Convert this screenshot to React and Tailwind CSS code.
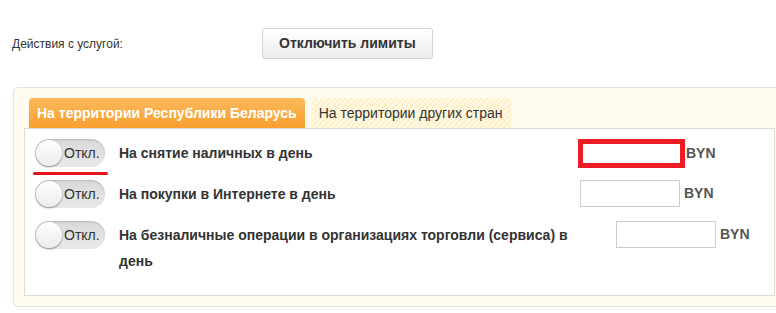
import React from 'react';

function Toggle({ marked }) {
  return (
    <div className="relative shrink-0">
      <div className="flex items-center w-[70px] h-[28px] rounded-full bg-gradient-to-b from-[#d9d9d9] to-[#e9e9e9] shadow-[inset_0_1px_2px_rgba(0,0,0,0.15)]">
        <div className="w-[26px] h-[26px] ml-[1px] rounded-full bg-gradient-to-b from-white to-[#ececec] shadow-[0_1px_2px_rgba(0,0,0,0.45)]" />
        <span className="ml-[2px] text-[14px] text-[#333]">Откл.</span>
      </div>
      {marked && <div className="absolute left-[-2px] top-[33px] w-[75px] h-[3px] rounded-full bg-[#e8141c]" />}
    </div>
  );
}

function Row({ label, labelW, inputGap, marked }) {
  return (
    <div className="flex items-start h-[41px]">
      <Toggle marked={marked} />
      <div className={`ml-[14px] ${labelW} text-[14px] font-bold text-[#333] leading-[26px] pt-[1px]`}>{label}</div>
      <div className={`flex items-center ${inputGap}`}>
        {marked ? (
          <div className="w-[107px] h-[29px] border-[5px] border-[#ed1c24] bg-white" />
        ) : (
          <input className="w-[100px] h-[27px] border border-[#ccc] bg-white outline-none" />
        )}
        <span className={`${marked ? 'ml-[1px]' : 'ml-[4px]'} text-[14px] font-bold text-[#555]`}>BYN</span>
      </div>
    </div>
  );
}

export default function App() {
  return (
    <div className="w-[776px] h-[313px] overflow-hidden bg-white font-['Liberation_Sans',Arial,sans-serif]">
      <div className="flex items-center mt-[28px] h-[31px]">
        <div className="pl-[12px] w-[262px] text-[12px] text-[#333]">Действия с услугой:</div>
        <button className="h-[31px] px-[16px] rounded-[3px] border border-[#d3d3d3] bg-gradient-to-b from-white to-[#ececec] text-[14px] font-bold text-[#333]">
          Отключить лимиты
        </button>
      </div>

      <div className="mt-[28px] ml-[13px] w-[790px] rounded-[4px] border border-[#e2e2e2] bg-[#fffbef] pt-[10px] pl-[10px] pb-[10px]">
        {/* tabs */}
        <div className="flex items-end gap-[6px] ml-[5px] h-[30px]">
          <div className="h-[30px] px-[8px] flex items-center rounded-t-[4px] bg-gradient-to-b from-[#fcb95a] to-[#f89f2d] text-white text-[14px] font-bold">
            На территории Республики Беларусь
          </div>
          <div className="h-[30px] px-[8px] flex items-center rounded-t-[4px] bg-[repeating-linear-gradient(135deg,#fff1c9_0px,#fff1c9_2px,#fff9e6_2px,#fff9e6_4px)] text-[#333] text-[14px]">
            На территории других стран
          </div>
        </div>

        <div className="w-[751px] h-[168px] border border-[#dcdcdc] bg-white pt-[10px] pl-[10px]">
          <Row marked label="На снятие наличных в день" labelW="w-[459px]" inputGap="" />
          <Row label="На покупки в Интернете в день" labelW="w-[461px]" inputGap="" />
          <Row label="На безналичные операции в организациях торговли (сервиса) в день" labelW="w-[461px]" inputGap="ml-[36px]" />
        </div>
      </div>
    </div>
  );
}
